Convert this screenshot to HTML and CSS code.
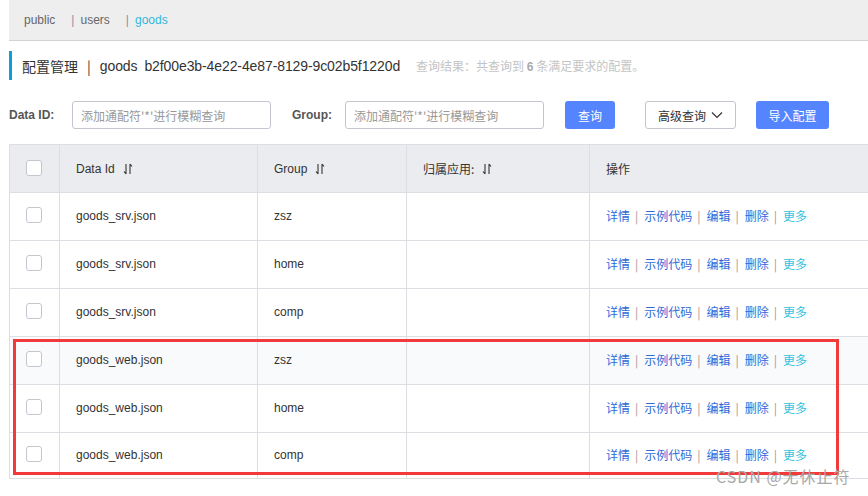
FILE: index.html
```html
<!DOCTYPE html>
<html>
<head>
<meta charset="utf-8">
<link rel="stylesheet" href="styles.css">
</head>
<body>
<div class="page">
  <div class="topbar">
    <span class="ns">public</span>
    <span class="sep">|</span><span class="ns">users</span>
    <span class="sep">|</span><span class="ns active">goods</span>
  </div>
  <div class="title">
    <span class="t-main">配置管理</span><span class="t-bar">|</span><span class="t-ns">goods</span><span class="t-id">b2f00e3b-4e22-4e87-8129-9c02b5f1220d</span>
    <span class="t-result">查询结果：共查询到 <b>6</b> 条满足要求的配置。</span>
  </div>
  <div class="search">
    <label class="lbl">Data ID:</label>
    <div class="input">添加通配符'*'进行模糊查询</div>
    <label class="lbl lbl2">Group:</label>
    <div class="input">添加通配符'*'进行模糊查询</div>
    <div class="btn primary b-query">查询</div>
    <div class="btn normal b-adv">高级查询 <svg width="12" height="8" viewBox="0 0 12 8"><path d="M1 1.5 L6 6.5 L11 1.5" fill="none" stroke="#333" stroke-width="1.2"/></svg></div>
    <div class="btn primary b-imp">导入配置</div>
  </div>
  <div class="table">
    <div class="row head">
      <div class="c c0"><span class="cb"></span></div>
      <div class="c c1">Data Id <svg class="sort" width="10" height="12" viewBox="0 0 10 12"><path d="M3 1 V11 M3 11 L1 8.5 M7 11 V1 M7 1 L9 3.5" fill="none" stroke="#333" stroke-width="1.1"/></svg></div>
      <div class="c c2">Group <svg class="sort" width="10" height="12" viewBox="0 0 10 12"><path d="M3 1 V11 M3 11 L1 8.5 M7 11 V1 M7 1 L9 3.5" fill="none" stroke="#333" stroke-width="1.1"/></svg></div>
      <div class="c c3">归属应用: <svg class="sort" width="10" height="12" viewBox="0 0 10 12"><path d="M3 1 V11 M3 11 L1 8.5 M7 11 V1 M7 1 L9 3.5" fill="none" stroke="#333" stroke-width="1.1"/></svg></div>
      <div class="c c4">操作</div>
    </div>
    <div class="row">
      <div class="c c0"><span class="cb"></span></div>
      <div class="c c1">goods_srv.json</div>
      <div class="c c2">zsz</div>
      <div class="c c3"></div>
      <div class="c c4 ops"><a>详情</a><i>|</i><a>示例代码</a><i>|</i><a>编辑</a><i>|</i><a>删除</a><i>|</i><a class="more">更多</a></div>
    </div>
    <div class="row">
      <div class="c c0"><span class="cb"></span></div>
      <div class="c c1">goods_srv.json</div>
      <div class="c c2">home</div>
      <div class="c c3"></div>
      <div class="c c4 ops"><a>详情</a><i>|</i><a>示例代码</a><i>|</i><a>编辑</a><i>|</i><a>删除</a><i>|</i><a class="more">更多</a></div>
    </div>
    <div class="row">
      <div class="c c0"><span class="cb"></span></div>
      <div class="c c1">goods_srv.json</div>
      <div class="c c2">comp</div>
      <div class="c c3"></div>
      <div class="c c4 ops"><a>详情</a><i>|</i><a>示例代码</a><i>|</i><a>编辑</a><i>|</i><a>删除</a><i>|</i><a class="more">更多</a></div>
    </div>
    <div class="row hover">
      <div class="c c0"><span class="cb"></span></div>
      <div class="c c1">goods_web.json</div>
      <div class="c c2">zsz</div>
      <div class="c c3"></div>
      <div class="c c4 ops"><a>详情</a><i>|</i><a>示例代码</a><i>|</i><a>编辑</a><i>|</i><a>删除</a><i>|</i><a class="more">更多</a></div>
    </div>
    <div class="row">
      <div class="c c0"><span class="cb"></span></div>
      <div class="c c1">goods_web.json</div>
      <div class="c c2">home</div>
      <div class="c c3"></div>
      <div class="c c4 ops"><a>详情</a><i>|</i><a>示例代码</a><i>|</i><a>编辑</a><i>|</i><a>删除</a><i>|</i><a class="more">更多</a></div>
    </div>
    <div class="row last">
      <div class="c c0"><span class="cb"></span></div>
      <div class="c c1">goods_web.json</div>
      <div class="c c2">comp</div>
      <div class="c c3"></div>
      <div class="c c4 ops"><a>详情</a><i>|</i><a>示例代码</a><i>|</i><a>编辑</a><i>|</i><a>删除</a><i>|</i><a class="more">更多</a></div>
    </div>
  </div>
  <div class="redbox"></div>
  <div class="watermark">CSDN @无休止符</div>
</div>
</body>
</html>
```
FILE: styles.css
```css
html, body {
  margin: 0;
  padding: 0;
  background: #fff;
  overflow: hidden;
}
.page {
  position: relative;
  width: 868px;
  height: 496px;
  overflow: hidden;
  font-family: "Liberation Sans", "Noto Sans CJK SC", sans-serif;
  font-size: 12px;
  color: #333;
}
.topbar {
  margin-left: 9px;
  height: 40px;
  background: #eeeeee;
  border-bottom: 1px solid #d3d3d3;
  display: flex;
  align-items: center;
  padding-left: 15px;
  color: #666;
}
.topbar .ns { color: #666; }
.topbar .sep { color: #8a8fa8; margin: 0 6px 0 16px; }
.topbar .active { color: #33b8dc; }
.title {
  margin: 10px 0 0 9px;
  height: 29px;
  border-left: 3px solid #0a9fd6;
  display: flex;
  align-items: center;
  padding-left: 10px;
  font-size: 14px;
  color: #333;
  font-family: "Noto Sans CJK SC", "Liberation Sans", sans-serif;
}
.t-main { font-family: "Noto Sans CJK SC", sans-serif; }
.t-bar { margin: 0 9px; }
.t-ns, .t-id { font-family: "Liberation Sans", sans-serif; letter-spacing: -0.1px; }
.t-id { margin-left: 7px; }
.t-result {
  margin-left: 16px;
  font-size: 12px;
  color: #c4c4c4;
  font-family: "Noto Sans CJK SC", sans-serif;
}
.t-result b { font-family: "Liberation Sans", sans-serif; font-weight: bold; color: #aaa; }
.search {
  margin: 21px 0 0 9px;
  display: flex;
  align-items: center;
  height: 28px;
}
.lbl {
  font-weight: bold;
  color: #555;
  font-size: 12px;
  width: 63px;
}
.lbl2 { width: 53px; margin-left: 21px; }
.input {
  width: 199px;
  height: 28px;
  box-sizing: border-box;
  border: 1px solid #c4c6cf;
  border-radius: 3px;
  padding-left: 8px;
  display: flex;
  align-items: center;
  color: #999;
  font-family: "Noto Sans CJK SC", sans-serif;
  font-size: 12px;
}
.btn {
  height: 28px;
  box-sizing: border-box;
  border-radius: 3px;
  display: flex;
  align-items: center;
  justify-content: center;
  font-family: "Noto Sans CJK SC", sans-serif;
  font-size: 12px;
}
.primary { background: #5584ff; color: #fff; }
.normal { background: #fff; border: 1px solid #c4c6cf; color: #333; gap: 5px; }
.b-query { width: 50px; margin-left: 21px; }
.b-adv { width: 91px; margin-left: 30px; }
.b-imp { width: 73px; margin-left: 20px; }
.table {
  margin: 15px 0 0 9px;
  width: 900px;
  border-top: 1px solid #dcdee3;
  border-left: 1px solid #dcdee3;
}
.row {
  display: flex;
  height: 48px;
  border-bottom: 1px solid #dcdee3;
  box-sizing: border-box;
}
.row.head { background: #ebecf0; height: 48px; }
.row.hover { background: #f9fafc; }
.row.last { height: 46px; }
.c {
  box-sizing: border-box;
  border-right: 1px solid #dcdee3;
  display: flex;
  align-items: center;
  padding-left: 16px;
  gap: 6px;
  font-family: "Liberation Sans", "Noto Sans CJK SC", sans-serif;
}
.c0 { width: 50px; padding-left: 16px; }
.c1 { width: 198px; }
.c2 { width: 149px; }
.c3 { width: 183px; font-family: "Noto Sans CJK SC", sans-serif; }
.c4 { flex: 1; font-family: "Noto Sans CJK SC", sans-serif; border-right: none; }
.row:not(.head) .c { padding-bottom: 2px; }
.cb {
  width: 16px;
  height: 16px;
  box-sizing: border-box;
  border: 1px solid #c4c6cf;
  border-radius: 3px;
  background: #fff;
  margin-bottom: 2px;
}
.sort { margin-left: 2px; }
.ops { gap: 0; }
.ops a { color: #2e6ad8; }
.ops a.more { color: #33c3e0; }
.ops i { font-style: normal; color: #999; margin: 0 6px 0 5px; }
.redbox {
  position: absolute;
  left: 13px;
  top: 339px;
  width: 826px;
  height: 136px;
  box-sizing: border-box;
  border: 3px solid #f23a3a;
}
.watermark {
  position: absolute;
  left: 716px;
  top: 464px;
  font-size: 16px;
  color: #a8a8a8;
  font-family: "Noto Sans CJK SC", sans-serif;
  letter-spacing: 1px;
}
```
